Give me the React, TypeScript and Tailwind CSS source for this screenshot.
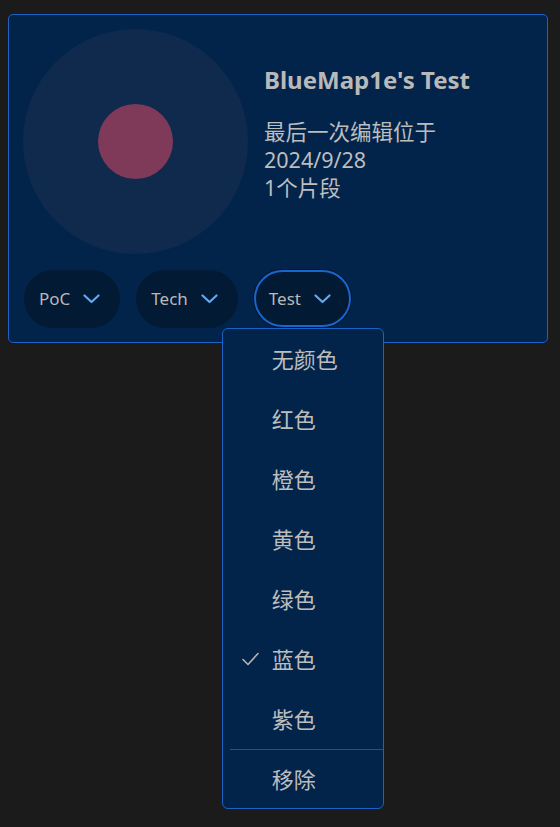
import React from "react";

const FONT = { fontFamily: '"Noto Sans", "Noto Sans CJK SC", sans-serif' };

const colors = ["无颜色", "红色", "橙色", "黄色", "绿色", "蓝色", "紫色"];

const Chevron = () => (
  <svg width="17" height="10" viewBox="0 0 17 10" fill="none">
    <path d="M1.5 1.5 L8.5 8 L15.5 1.5" stroke="#62a9ef" strokeWidth="2.2" strokeLinecap="round" strokeLinejoin="round" />
  </svg>
);

const Check = () => (
  <svg width="17" height="14" viewBox="0 0 17 14" fill="none">
    <path d="M1 7.5 L6 12.5 L16 1.5" stroke="#b5b5b5" strokeWidth="1.6" strokeLinecap="round" strokeLinejoin="round" />
  </svg>
);

const Chip: React.FC<{ label: string; active?: boolean; children?: React.ReactNode }> = ({ label, active, children }) => (
  <div className="relative">
    <div
      className={
        active
          ? "flex h-[57px] items-center gap-[13px] rounded-full border-2 border-[#1766d0] bg-[#021a33] pl-[13px] pr-[18px] shadow-[0_0_0_1px_#0a1220]"
          : "flex h-[58px] items-center gap-[13px] rounded-full bg-[#021a33] pl-[15px] pr-[20px]"
      }
    >
      <span className="text-[17px] text-[#b9b9b9]">{label}</span>
      <Chevron />
    </div>
    {children}
  </div>
);

const Menu = () => (
  <div className="absolute left-[-32px] top-[58px] z-10 w-[162px] rounded-[6px] border border-[#1a62c4] bg-[#03244a]">
    {colors.map((c) => (
      <div key={c} className="relative flex h-[60px] items-center pl-[49px] text-[22px] text-[#bdbdbd]">
        {c === "蓝色" && (
          <span className="absolute left-[19px] top-[23px]">
            <Check />
          </span>
        )}
        {c}
      </div>
    ))}
    <div className="ml-[7px] h-px bg-[#4a4a4a]" />
    <div className="flex h-[58px] items-center pl-[49px] pt-[1px] text-[22px] text-[#bdbdbd]">移除</div>
  </div>
);

export default function App() {
  return (
    <div className="min-h-[827px] bg-[#1b1b1b] pt-[14px]" style={FONT}>
      <div className="ml-2 mr-3 rounded-[5px] border border-[#1a62c4] bg-[#03244a] p-[14px]">
        <div className="flex gap-4">
          <div className="flex h-[225px] w-[225px] shrink-0 items-center justify-center rounded-full bg-[#0f2a4d]">
            <div className="h-[75px] w-[75px] rounded-full bg-[#7f3a5a]" />
          </div>
          <div className="flex flex-col pt-[33px]">
            <div className="text-[24px] font-bold text-[#b9b9b9]">BlueMap1e's Test</div>
            <div className="mt-[20px] text-[21.5px] leading-[28px] text-[#bdbdbd]">
              <div>最后一次编辑位于</div>
              <div>2024/9/28</div>
              <div>1个片段</div>
            </div>
          </div>
        </div>
        <div className="mt-[16px] flex gap-[16px] pl-px">
          <Chip label="PoC" />
          <Chip label="Tech" />
          <Chip label="Test" active>
            <Menu />
          </Chip>
        </div>
      </div>
    </div>
  );
}
